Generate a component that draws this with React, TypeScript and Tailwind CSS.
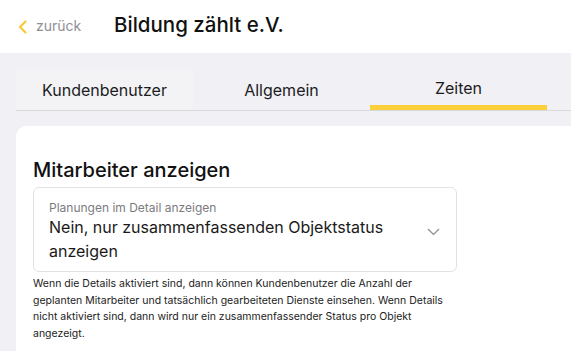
import React from "react";

export default function App() {
  return (
    <div
      className="w-[571px] h-[351px] overflow-hidden bg-[#f1f0f5]"
      style={{ fontFamily: "Inter, 'Noto Sans', sans-serif" }}
    >
      <header className="h-[53px] bg-white flex items-center">
        <button className="flex items-center pl-[17px] w-[114px] text-[14px] text-[#8e8e93]">
          <svg width="12" height="16" viewBox="0 0 12 16" className="mr-[7px]">
            <path d="M8.5 2.5 L3 8 L8.5 13.5" fill="none" stroke="#fcc934" strokeWidth="2.2" strokeLinecap="round" strokeLinejoin="round" />
          </svg>
          <span className="leading-none pb-[1px]">zurück</span>
        </button>
        <h1 className="text-[20.5px] font-medium text-[#111] leading-none pb-[2px]">Bildung zählt e.V.</h1>
      </header>
      <main className="pl-4 pt-4">
        <nav className="flex border-b border-[#d8d8dc] h-[42px]">
          <div className="w-[177px] h-full flex items-center justify-center bg-[#f3f3f6] text-[16px] text-[#1c1c1e]">
            Kundenbenutzer
          </div>
          <div className="w-[177px] h-full flex items-center justify-center text-[16px] text-[#1c1c1e]">
            Allgemein
          </div>
          <div className="w-[177px] h-full flex flex-col">
            <div className="flex-1 flex items-center justify-center text-[16px] text-[#1c1c1e] pt-[1px]">Zeiten</div>
            <div className="h-[5px] bg-[#fdd03b]" />
          </div>
        </nav>
        <section className="mt-[15px] bg-white rounded-tl-[10px] pl-[17px] pt-[30px] h-[300px]">
          <h2 className="text-[20px] leading-[28px] font-medium text-[#111]">Mitarbeiter anzeigen</h2>
          <div className="mt-[3px] w-[424px] h-[85px] border border-[#e2e2e4] rounded-[6px] pl-[15px] pr-[16px] pt-[13px] flex items-start">
            <div className="flex-1">
              <div className="text-[12px] leading-[14px] text-[#7b7b80]">Planungen im Detail anzeigen</div>
              <div className="text-[16px] leading-[24px] text-[#1a1a1a]">
                Nein, nur zusammenfassenden Objektstatus anzeigen
              </div>
            </div>
            <svg width="13" height="8" viewBox="0 0 13 8" className="mt-[27px] ml-2">
              <path d="M1 1 L6.5 6.5 L12 1" fill="none" stroke="#8a8a90" strokeWidth="1.2" />
            </svg>
          </div>
          <p className="mt-[4px] w-[424px] text-[10.5px] leading-[16.5px] text-[#222]">
            Wenn die Details aktiviert sind, dann können Kundenbenutzer die Anzahl der geplanten Mitarbeiter und tatsächlich gearbeiteten Dienste einsehen. Wenn Details nicht aktiviert sind, dann wird nur ein zusammenfassender Status pro Objekt angezeigt.
          </p>
        </section>
      </main>
    </div>
  );
}
